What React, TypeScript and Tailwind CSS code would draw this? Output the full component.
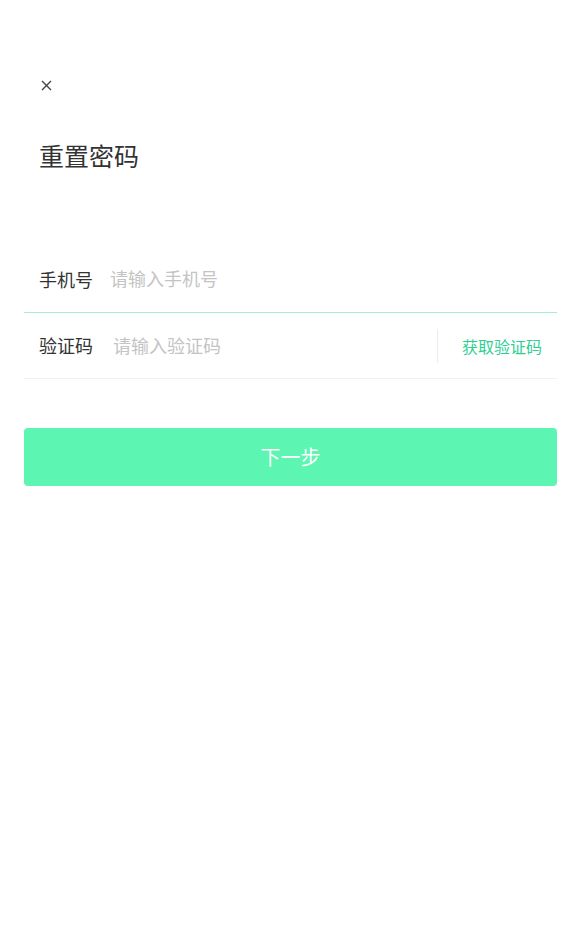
import React from "react";

export default function App() {
  const font = { fontFamily: '"Noto Sans CJK SC", "Noto Sans", sans-serif' };
  return (
    <div className="w-[581px] h-[930px] bg-white" style={font}>
      <div className="px-[24px]">
        <div className="h-[170px] pt-[72px] pl-[15px]">
          <div className="h-[26px] flex items-center">
            <svg width="11" height="11" viewBox="0 0 11 11" className="ml-[2px]">
              <path d="M1 1 L10 10 M10 1 L1 10" stroke="#444" strokeWidth="1.4" />
            </svg>
          </div>
          <div className="mt-[39px] text-[25px] leading-[36px] text-[#333]">重置密码</div>
        </div>
        <div className="mt-[76px]">
          <div className="h-[67px] flex items-center px-[15px] border-b border-[#a6eadb]">
            <span className="text-[18px] text-[#333] w-[71px] shrink-0">手机号</span>
            <input
              className="flex-1 outline-none text-[18px] text-[#333] placeholder:text-[#c4c4c4] bg-transparent -mt-[2px]"
              placeholder="请输入手机号"
              style={font}
            />
          </div>
          <div className="h-[66px] flex items-center pl-[15px] pr-[15px] border-b border-[#f2f2f2]">
            <span className="text-[18px] text-[#333] w-[74px] shrink-0">验证码</span>
            <input
              className="flex-1 min-w-0 outline-none text-[18px] text-[#333] placeholder:text-[#c4c4c4] bg-transparent"
              placeholder="请输入验证码"
              style={font}
            />
            <div className="w-px h-[34px] bg-[#ececec] ml-[11px]" />
            <span className="text-[16px] text-[#2ecf93] pl-[24px] shrink-0">获取验证码</span>
          </div>
        </div>
        <button
          className="mt-[49px] w-full h-[58px] rounded-[4px] bg-[#5cf5b1] text-white text-[20px]"
          style={font}
        >
          下一步
        </button>
      </div>
    </div>
  );
}
